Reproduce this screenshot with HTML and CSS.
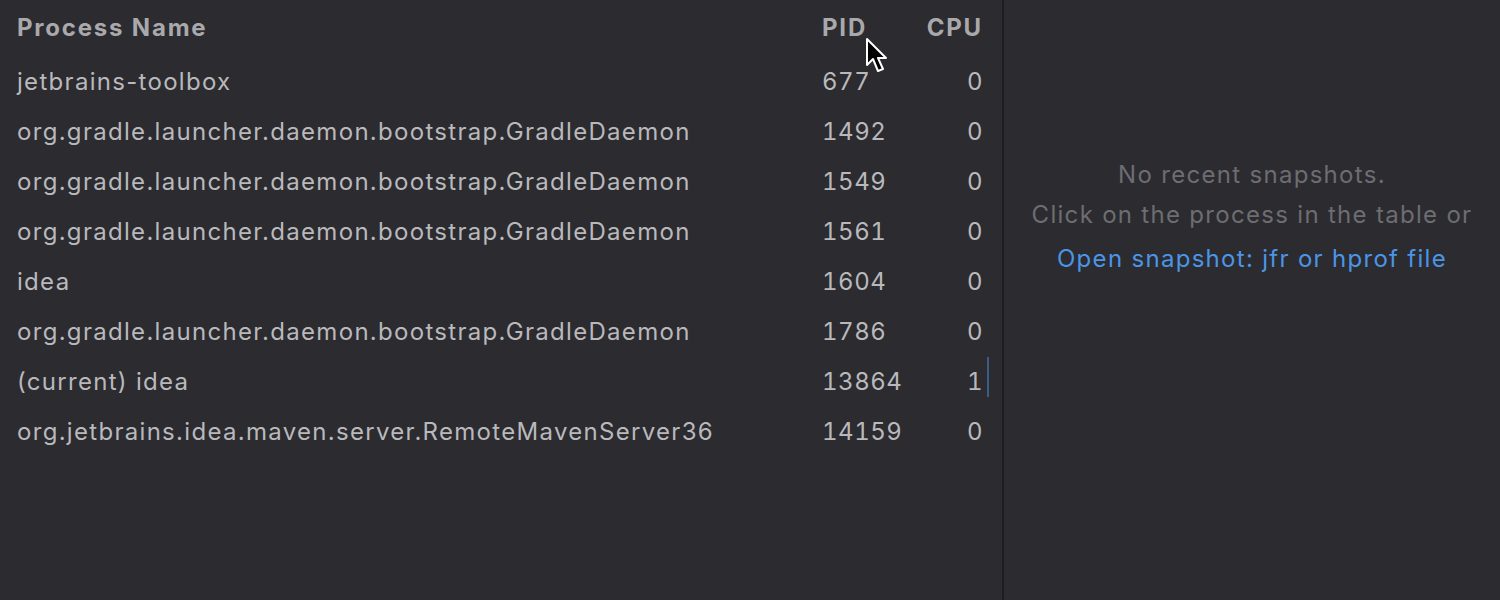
FILE: index.html
```html
<!DOCTYPE html>
<html>
<head>
<meta charset="utf-8">
<link rel="stylesheet" href="styles.css">
</head>
<body>
<div class="app">
  <div class="left">
    <div class="table">
      <div class="row head">
        <div class="c-name">Process Name</div>
        <div class="c-pid">PID</div>
        <div class="c-cpu">CPU</div>
      </div>
      <div class="row"><div class="c-name">jetbrains-toolbox</div><div class="c-pid">677</div><div class="c-cpu">0</div></div>
      <div class="row"><div class="c-name">org.gradle.launcher.daemon.bootstrap.GradleDaemon</div><div class="c-pid">1492</div><div class="c-cpu">0</div></div>
      <div class="row"><div class="c-name">org.gradle.launcher.daemon.bootstrap.GradleDaemon</div><div class="c-pid">1549</div><div class="c-cpu">0</div></div>
      <div class="row"><div class="c-name">org.gradle.launcher.daemon.bootstrap.GradleDaemon</div><div class="c-pid">1561</div><div class="c-cpu">0</div></div>
      <div class="row"><div class="c-name">idea</div><div class="c-pid">1604</div><div class="c-cpu">0</div></div>
      <div class="row"><div class="c-name">org.gradle.launcher.daemon.bootstrap.GradleDaemon</div><div class="c-pid">1786</div><div class="c-cpu">0</div></div>
      <div class="row"><div class="c-name">(current) idea</div><div class="c-pid">13864</div><div class="c-cpu"><span class="caretcell">1</span></div></div>
      <div class="row"><div class="c-name">org.jetbrains.idea.maven.server.RemoteMavenServer36</div><div class="c-pid">14159</div><div class="c-cpu">0</div></div>
    </div>
    <svg class="cursor" width="26" height="38" viewBox="0 0 26 38">
      <path d="M2 2 L2 28 L8 22 L13 34 L18 32 L13 21 L21 21 Z" fill="#000" stroke="#fff" stroke-width="2" stroke-linejoin="round"/>
    </svg>
  </div>
  <div class="sep"></div>
  <div class="right">
    <div class="msg">No recent snapshots.</div>
    <div class="msg">Click on the process in the table or</div>
    <div class="link">Open snapshot: jfr or hprof file</div>
  </div>
</div>
</body>
</html>
```
FILE: styles.css
```css
html, body {
  margin: 0;
  padding: 0;
  background: #2b2b30;
  height: 100%;
}
body {
  font-family: Inter, "Noto Sans", sans-serif;
  overflow: hidden;
}
.app {
  display: flex;
  width: 1500px;
  height: 600px;
}
.left {
  width: 1002px;
  position: relative;
}
.sep {
  width: 2px;
  background: #1d1d21;
}
.right {
  flex: 1;
  display: flex;
  flex-direction: column;
  align-items: center;
  padding-top: 158px;
  font-size: 24px;
  letter-spacing: 1.3px;
}
.msg {
  color: #6d6d72;
  height: 40px;
  line-height: 34px;
}
.link {
  color: #4b95e6;
  line-height: 34px;
  margin-top: 4px;
}
.table {
  display: flex;
  flex-direction: column;
  padding-top: 2px;
}
.row {
  display: grid;
  grid-template-columns: 805px 100px 60px;
  padding-left: 17px;
  height: 50px;
  align-items: center;
  font-size: 24px;
  letter-spacing: 1.3px;
  color: #b9b9bc;
}
.row .c-pid, .row .c-cpu {
  font-variant-numeric: tabular-nums;
  letter-spacing: 0.5px;
}
.row.head {
  height: 50px;
  margin-bottom: 4px;
  font-weight: 700;
  color: #a9a9ac;
}
.row.head .c-name, .row.head .c-pid, .row.head .c-cpu {
  letter-spacing: 1.8px;
}
.c-cpu {
  text-align: right;
  margin-right: -1px;
}
.caretcell {
  position: relative;
}
.caretcell::after {
  content: "";
  position: absolute;
  right: -6px;
  top: -10px;
  width: 2px;
  height: 40px;
  background: #3a5d85;
}
.cursor {
  position: absolute;
  left: 865px;
  top: 37px;
}
```
